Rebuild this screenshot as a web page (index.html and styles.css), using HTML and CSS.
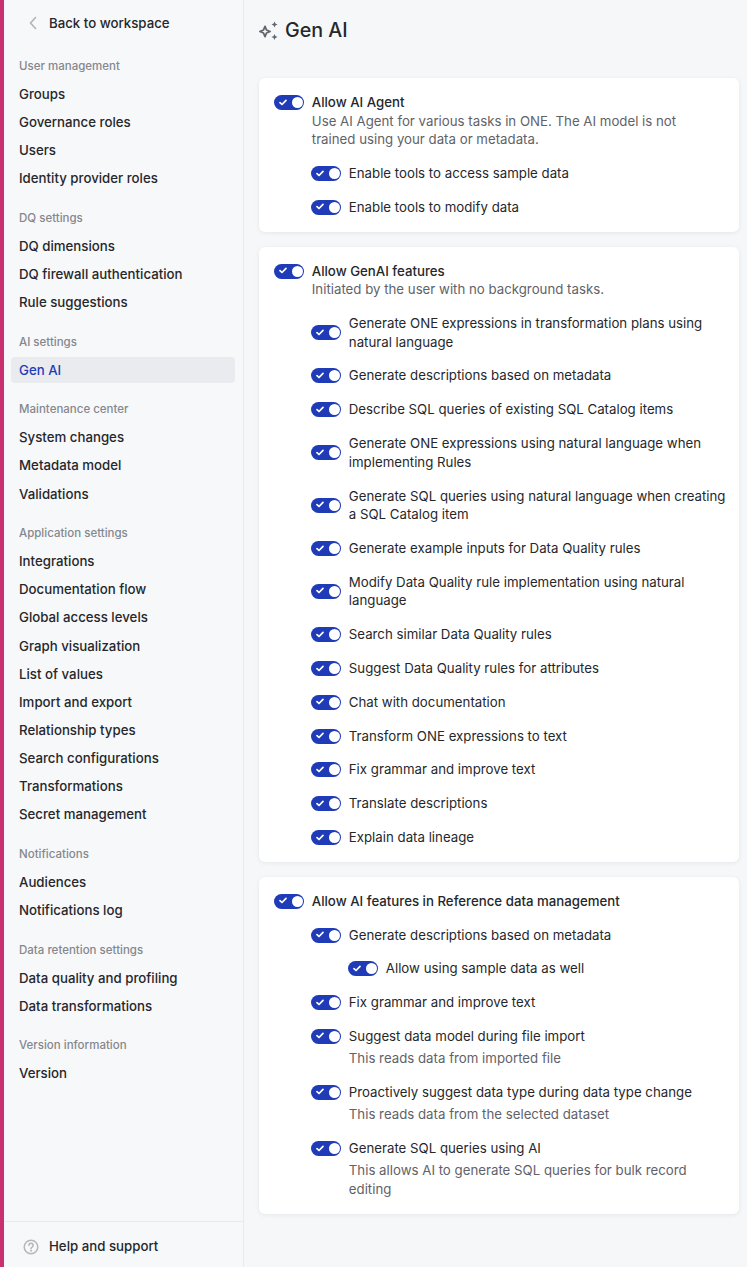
FILE: index.html
```html
<!DOCTYPE html>
<html lang="en">
<head>
    <meta charset="UTF-8">
    <title>Gen AI</title>
    <link rel="stylesheet" href="styles.css">
</head>
<body>
    <svg class="icon-sprite" width="0" height="0">
        <symbol id="check" viewBox="0 0 8 7">
            <path d="M1 3.600 3 5.500 7 1.300" fill="none" stroke="#fff" stroke-width="1.700" stroke-linecap="round" stroke-linejoin="round"/>
        </symbol>
    </svg>

    <aside class="sidebar">
        <a class="back-link">
            <svg class="back-icon" viewBox="0 0 8 14" width="8" height="14"><path d="M6.500 1.500 1.500 7l5 5.500" fill="none" stroke="#b0b3b8" stroke-width="1.600" stroke-linecap="round" stroke-linejoin="round"/></svg>
            <span>Back to workspace</span>
        </a>

        <nav class="nav">
            <div class="nav-section">
                <div class="nav-label">User management</div>
                <a class="nav-item">Groups</a>
                <a class="nav-item">Governance roles</a>
                <a class="nav-item">Users</a>
                <a class="nav-item">Identity provider roles</a>
            </div>
            <div class="nav-section">
                <div class="nav-label">DQ settings</div>
                <a class="nav-item">DQ dimensions</a>
                <a class="nav-item">DQ firewall authentication</a>
                <a class="nav-item">Rule suggestions</a>
            </div>
            <div class="nav-section">
                <div class="nav-label">AI settings</div>
                <a class="nav-item active">Gen AI</a>
            </div>
            <div class="nav-section">
                <div class="nav-label">Maintenance center</div>
                <a class="nav-item">System changes</a>
                <a class="nav-item">Metadata model</a>
                <a class="nav-item">Validations</a>
            </div>
            <div class="nav-section">
                <div class="nav-label">Application settings</div>
                <a class="nav-item">Integrations</a>
                <a class="nav-item">Documentation flow</a>
                <a class="nav-item">Global access levels</a>
                <a class="nav-item">Graph visualization</a>
                <a class="nav-item">List of values</a>
                <a class="nav-item">Import and export</a>
                <a class="nav-item">Relationship types</a>
                <a class="nav-item">Search configurations</a>
                <a class="nav-item">Transformations</a>
                <a class="nav-item">Secret management</a>
            </div>
            <div class="nav-section">
                <div class="nav-label">Notifications</div>
                <a class="nav-item">Audiences</a>
                <a class="nav-item">Notifications log</a>
            </div>
            <div class="nav-section">
                <div class="nav-label">Data retention settings</div>
                <a class="nav-item">Data quality and profiling</a>
                <a class="nav-item">Data transformations</a>
            </div>
            <div class="nav-section">
                <div class="nav-label">Version information</div>
                <a class="nav-item">Version</a>
            </div>
        </nav>

        <a class="help-link">
            <svg viewBox="0 0 16 16" width="16" height="16">
                <circle cx="8" cy="8" r="6.800" fill="none" stroke="#b4b7bb" stroke-width="1.500"/>
                <path d="M5.900 6.300a2.100 2.100 0 1 1 3.200 1.800c-.7.400-1.100.8-1.100 1.500" fill="none" stroke="#b4b7bb" stroke-width="1.600" stroke-linecap="round"/>
                <circle cx="8" cy="11.700" r="1" fill="#b4b7bb"/>
            </svg>
            <span>Help and support</span>
        </a>
    </aside>

    <main class="content">
        <h1 class="page-title">
            <svg viewBox="0 0 20 20" width="20" height="20">
                <path d="M6 6.400 7.500 10 11.100 11.500 7.500 13 6 16.600 4.500 13 .9 11.500 4.500 10Z" fill="none" stroke="#63666c" stroke-width="1.800" stroke-linejoin="round"/>
                <path d="M15.500 1.500 16.400 3.600 18.500 4.500 16.400 5.400 15.500 7.500 14.600 5.400 12.500 4.500 14.600 3.600Z" fill="#63666c"/>
                <path d="M15.500 14 16.400 16.100 18.500 17 16.400 17.900 15.500 20 14.600 17.900 12.500 17 14.600 16.100Z" fill="#63666c"/>
            </svg>
            Gen AI
        </h1>

        <section class="card">
            <div class="setting">
                <span class="switch"><svg class="switch-check"><use href="#check"/></svg></span>
                <div class="setting-text">
                    <div class="setting-title">Allow AI Agent</div>
                    <div class="setting-desc">Use AI Agent for various tasks in ONE. The AI model is not<br>trained using your data or metadata.</div>
                </div>
            </div>
            <div class="sub-list">
                <div class="setting">
                    <span class="switch"><svg class="switch-check"><use href="#check"/></svg></span>
                    <div class="setting-text">Enable tools to access sample data</div>
                </div>
                <div class="setting">
                    <span class="switch"><svg class="switch-check"><use href="#check"/></svg></span>
                    <div class="setting-text">Enable tools to modify data</div>
                </div>
            </div>
        </section>

        <section class="card">
            <div class="setting">
                <span class="switch"><svg class="switch-check"><use href="#check"/></svg></span>
                <div class="setting-text">
                    <div class="setting-title">Allow GenAI features</div>
                    <div class="setting-desc">Initiated by the user with no background tasks.</div>
                </div>
            </div>
            <div class="sub-list">
                <div class="setting center">
                    <span class="switch"><svg class="switch-check"><use href="#check"/></svg></span>
                    <div class="setting-text">Generate ONE expressions in transformation plans using natural language</div>
                </div>
                <div class="setting">
                    <span class="switch"><svg class="switch-check"><use href="#check"/></svg></span>
                    <div class="setting-text">Generate descriptions based on metadata</div>
                </div>
                <div class="setting">
                    <span class="switch"><svg class="switch-check"><use href="#check"/></svg></span>
                    <div class="setting-text">Describe SQL queries of existing SQL Catalog items</div>
                </div>
                <div class="setting center">
                    <span class="switch"><svg class="switch-check"><use href="#check"/></svg></span>
                    <div class="setting-text">Generate ONE expressions using natural language when implementing Rules</div>
                </div>
                <div class="setting center">
                    <span class="switch"><svg class="switch-check"><use href="#check"/></svg></span>
                    <div class="setting-text">Generate SQL queries using natural language when creating a SQL Catalog item</div>
                </div>
                <div class="setting">
                    <span class="switch"><svg class="switch-check"><use href="#check"/></svg></span>
                    <div class="setting-text">Generate example inputs for Data Quality rules</div>
                </div>
                <div class="setting center">
                    <span class="switch"><svg class="switch-check"><use href="#check"/></svg></span>
                    <div class="setting-text">Modify Data Quality rule implementation using natural language</div>
                </div>
                <div class="setting">
                    <span class="switch"><svg class="switch-check"><use href="#check"/></svg></span>
                    <div class="setting-text">Search similar Data Quality rules</div>
                </div>
                <div class="setting">
                    <span class="switch"><svg class="switch-check"><use href="#check"/></svg></span>
                    <div class="setting-text">Suggest Data Quality rules for attributes</div>
                </div>
                <div class="setting">
                    <span class="switch"><svg class="switch-check"><use href="#check"/></svg></span>
                    <div class="setting-text">Chat with documentation</div>
                </div>
                <div class="setting">
                    <span class="switch"><svg class="switch-check"><use href="#check"/></svg></span>
                    <div class="setting-text">Transform ONE expressions to text</div>
                </div>
                <div class="setting">
                    <span class="switch"><svg class="switch-check"><use href="#check"/></svg></span>
                    <div class="setting-text">Fix grammar and improve text</div>
                </div>
                <div class="setting">
                    <span class="switch"><svg class="switch-check"><use href="#check"/></svg></span>
                    <div class="setting-text">Translate descriptions</div>
                </div>
                <div class="setting">
                    <span class="switch"><svg class="switch-check"><use href="#check"/></svg></span>
                    <div class="setting-text">Explain data lineage</div>
                </div>
            </div>
        </section>

        <section class="card">
            <div class="setting">
                <span class="switch"><svg class="switch-check"><use href="#check"/></svg></span>
                <div class="setting-text">
                    <div class="setting-title">Allow AI features in Reference data management</div>
                </div>
            </div>
            <div class="sub-list">
                <div class="setting">
                    <span class="switch"><svg class="switch-check"><use href="#check"/></svg></span>
                    <div class="setting-text">Generate descriptions based on metadata</div>
                </div>
                <div class="sub-list nested">
                    <div class="setting">
                        <span class="switch"><svg class="switch-check"><use href="#check"/></svg></span>
                        <div class="setting-text">Allow using sample data as well</div>
                    </div>
                </div>
                <div class="setting">
                    <span class="switch"><svg class="switch-check"><use href="#check"/></svg></span>
                    <div class="setting-text">Fix grammar and improve text</div>
                </div>
                <div class="setting">
                    <span class="switch"><svg class="switch-check"><use href="#check"/></svg></span>
                    <div class="setting-text">
                        Suggest data model during file import
                        <div class="setting-note">This reads data from imported file</div>
                    </div>
                </div>
                <div class="setting">
                    <span class="switch"><svg class="switch-check"><use href="#check"/></svg></span>
                    <div class="setting-text">
                        Proactively suggest data type during data type change
                        <div class="setting-note">This reads data from the selected dataset</div>
                    </div>
                </div>
                <div class="setting">
                    <span class="switch"><svg class="switch-check"><use href="#check"/></svg></span>
                    <div class="setting-text">
                        Generate SQL queries using AI
                        <div class="setting-note">This allows AI to generate SQL queries for bulk record editing</div>
                    </div>
                </div>
            </div>
        </section>
    </main>
</body>
</html>
```

FILE: styles.css
```css
* {
    box-sizing: border-box;
}

body {
    margin: 0;
    height: 1267px;
    overflow: hidden;
    display: flex;
    font-family: Inter, "Liberation Sans", sans-serif;
    font-size: 13.250px;
    line-height: 18.670px;
    color: #25272b;
    background: #f6f7f9;
}

.icon-sprite {
    position: absolute;
}

/* sidebar */
.sidebar {
    width: 244px;
    height: 1267px;
    flex-shrink: 0;
    display: flex;
    flex-direction: column;
    border-left: 4px solid #c9306f;
    border-right: 1px solid #e8eaed;
    background: #f7f8fa;
}

.back-link {
    display: flex;
    align-items: center;
    height: 46px;
    padding-left: 25px;
    font-weight: 500;
}

.back-link span {
    margin-left: 12px;
}

.nav {
    flex: 1;
    padding: 10px 8px 0 7px;
}

.nav-section {
    margin-bottom: 16.400px;
}

.nav-label {
    height: 20px;
    margin-bottom: 5px;
    padding-left: 8px;
    font-size: 11.500px;
    line-height: 20px;
    font-weight: 500;
    color: #85878c;
}

.nav-item {
    display: block;
    height: 26.150px;
    margin-top: 2px;
    padding: 0 8px;
    line-height: 26px;
    font-weight: 500;
    border-radius: 4px;
}

.nav-item.active {
    background: #e9ebee;
    color: #1f3bb8;
}

.help-link {
    display: flex;
    align-items: center;
    height: 46px;
    padding: 4px 0 0 19px;
    border-top: 1px solid #e8eaed;
    font-weight: 500;
}

.help-link span {
    margin-left: 10px;
}

/* main */
.content {
    flex: 1;
    padding: 0 8px 0 15px;
}

.page-title {
    display: flex;
    align-items: center;
    gap: 6px;
    height: 60px;
    margin: 0 0 18px;
    font-size: 19.700px;
    font-weight: 500;
}

.card {
    margin-bottom: 15px;
    padding: 15px 12px 15px 15px;
    background: #fff;
    border-radius: 6px;
    box-shadow: 0 1px 4px rgba(30, 40, 60, 0.08);
}

.setting {
    display: flex;
    align-items: flex-start;
    gap: 7.800px;
}

.setting.center {
    align-items: center;
}

.switch {
    width: 30px;
    height: 15px;
    margin-top: 2px;
    flex-shrink: 0;
    position: relative;
    border-radius: 8px;
    background: #1f3bb8;
}

.setting.center .switch {
    margin-top: 0;
}

.switch::after {
    content: "";
    position: absolute;
    right: 1.500px;
    top: 2px;
    width: 11px;
    height: 11px;
    border-radius: 50%;
    background: #fff;
}

.switch-check {
    position: absolute;
    left: 4.500px;
    top: 3.500px;
    width: 8px;
    height: 7px;
}

.setting-title {
    font-weight: 500;
}

.setting-desc,
.setting-note {
    color: #5f6268;
}

.setting-note {
    margin-top: 3.600px;
}

.sub-list {
    display: flex;
    flex-direction: column;
    gap: 15.130px;
    margin-top: 15.100px;
    padding-left: 37px;
}

.sub-list.nested {
    margin-top: 0;
}
```
